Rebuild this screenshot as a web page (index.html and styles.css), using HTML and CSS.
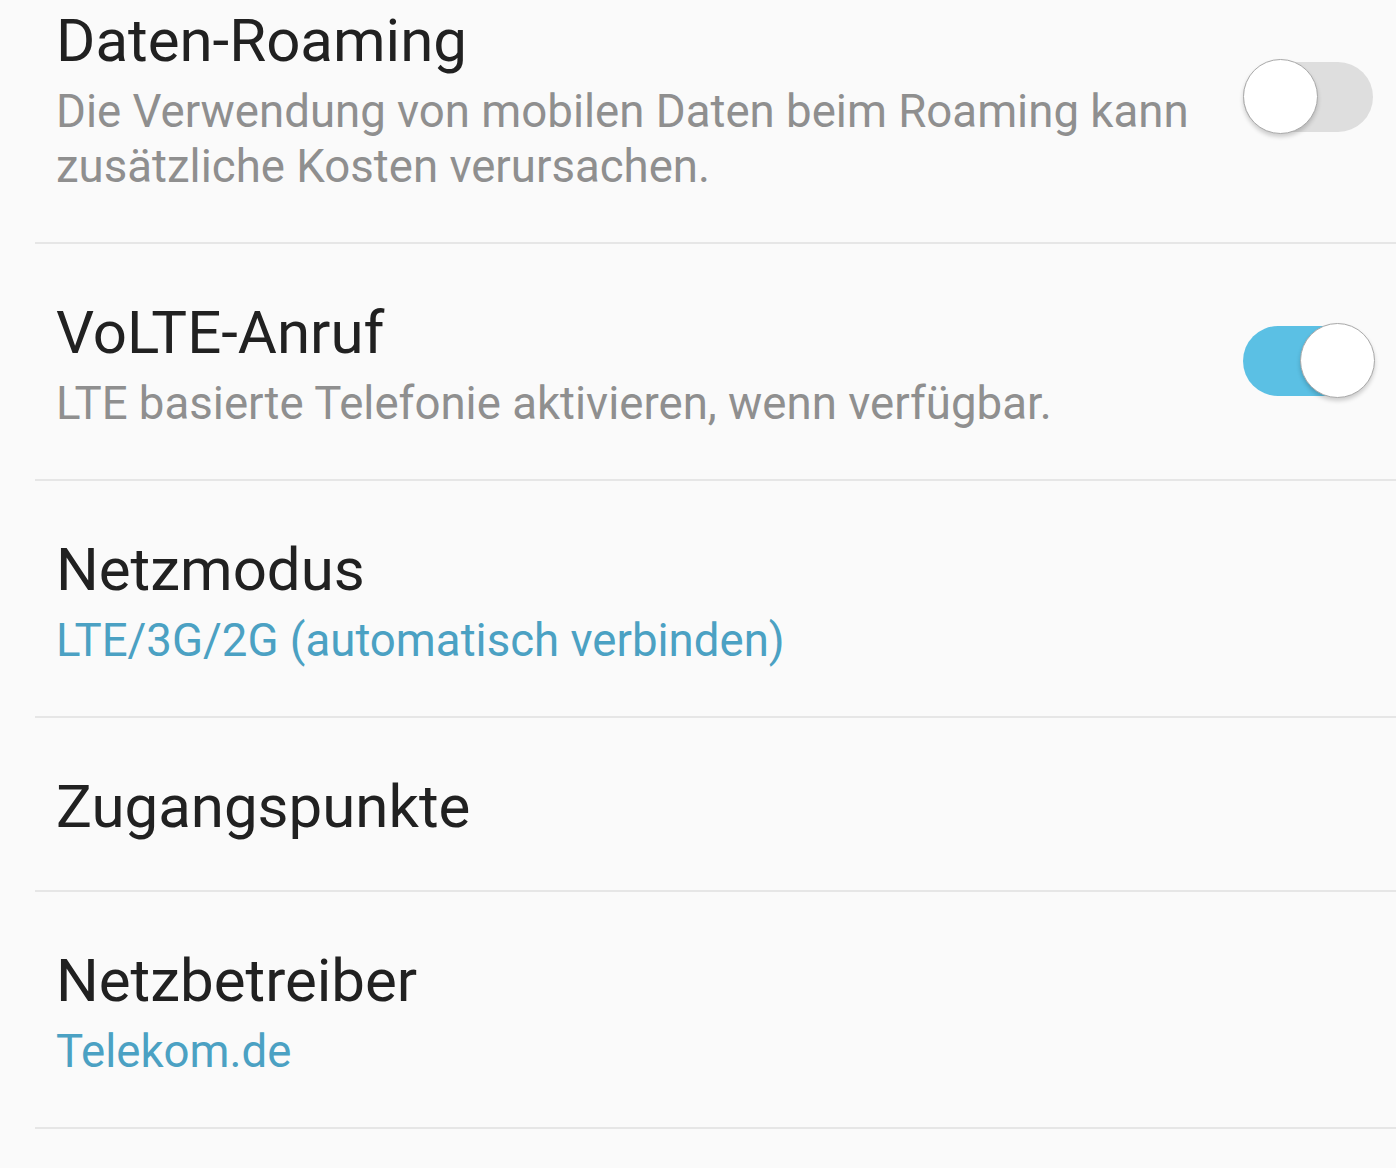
FILE: index.html
```html
<!DOCTYPE html>
<html lang="de">
<head>
<meta charset="utf-8">
<title>Mobile Netzwerke</title>
<link rel="stylesheet" href="styles.css">
</head>
<body>
<div class="list">
  <div class="row">
    <div class="text">
      <div class="title">Daten-Roaming</div>
      <div class="summary">Die Verwendung von mobilen Daten beim Roaming kann zusätzliche Kosten verursachen.</div>
    </div>
    <div class="switch">
      <div class="track"></div>
      <div class="thumb"></div>
    </div>
  </div>
  <div class="row">
    <div class="text">
      <div class="title">VoLTE-Anruf</div>
      <div class="summary">LTE basierte Telefonie aktivieren, wenn verfügbar.</div>
    </div>
    <div class="switch switch--on">
      <div class="track"></div>
      <div class="thumb"></div>
    </div>
  </div>
  <div class="row">
    <div class="text">
      <div class="title">Netzmodus</div>
      <div class="summary summary--value">LTE/3G/2G (automatisch verbinden)</div>
    </div>
  </div>
  <div class="row">
    <div class="text">
      <div class="title">Zugangspunkte</div>
    </div>
  </div>
  <div class="row">
    <div class="text">
      <div class="title">Netzbetreiber</div>
      <div class="summary summary--value">Telekom.de</div>
    </div>
  </div>
  <div class="row row--empty"></div>
</div>
</body>
</html>
```

FILE: styles.css
```css
html, body {
  margin: 0;
  padding: 0;
  background: #fafafa;
}

body {
  font-family: Roboto, "Noto Sans", "Liberation Sans", sans-serif;
  overflow: hidden;
  height: 1168px;
}

.list {
  margin-top: -48.5px;
  margin-left: 35px;
}

.row {
  display: flex;
  align-items: center;
  border-bottom: 2px solid #e6e6e6;
}

.row--empty {
  height: 40px;
  border-bottom: none;
}

.text {
  flex: 1;
  min-width: 0;
  padding: 54.5px 20px 47.5px 21px;
}

.title {
  font-size: 60px;
  line-height: 70px;
  color: #212121;
}

.summary {
  margin-top: 8px;
  font-size: 45.6px;
  line-height: 55px;
  color: #8f8f8f;
}

.summary--value {
  color: #4ba1c3;
}

.switch {
  position: relative;
  flex: none;
  width: 132px;
  height: 76px;
  margin-right: 21px;
}

.track {
  position: absolute;
  left: 0;
  top: 3px;
  width: 130px;
  height: 70px;
  border-radius: 35px;
  background: #dedede;
}

.switch--on .track {
  background: #5bc0e4;
}

.thumb {
  position: absolute;
  top: 0;
  left: 0;
  width: 73px;
  height: 73px;
  border-radius: 50%;
  background: #ffffff;
  border: 1.5px solid #a9a9a9;
  box-shadow: 0 3px 4px rgba(0, 0, 0, 0.18);
}

.switch--on .thumb {
  left: auto;
  right: 0;
}
```
